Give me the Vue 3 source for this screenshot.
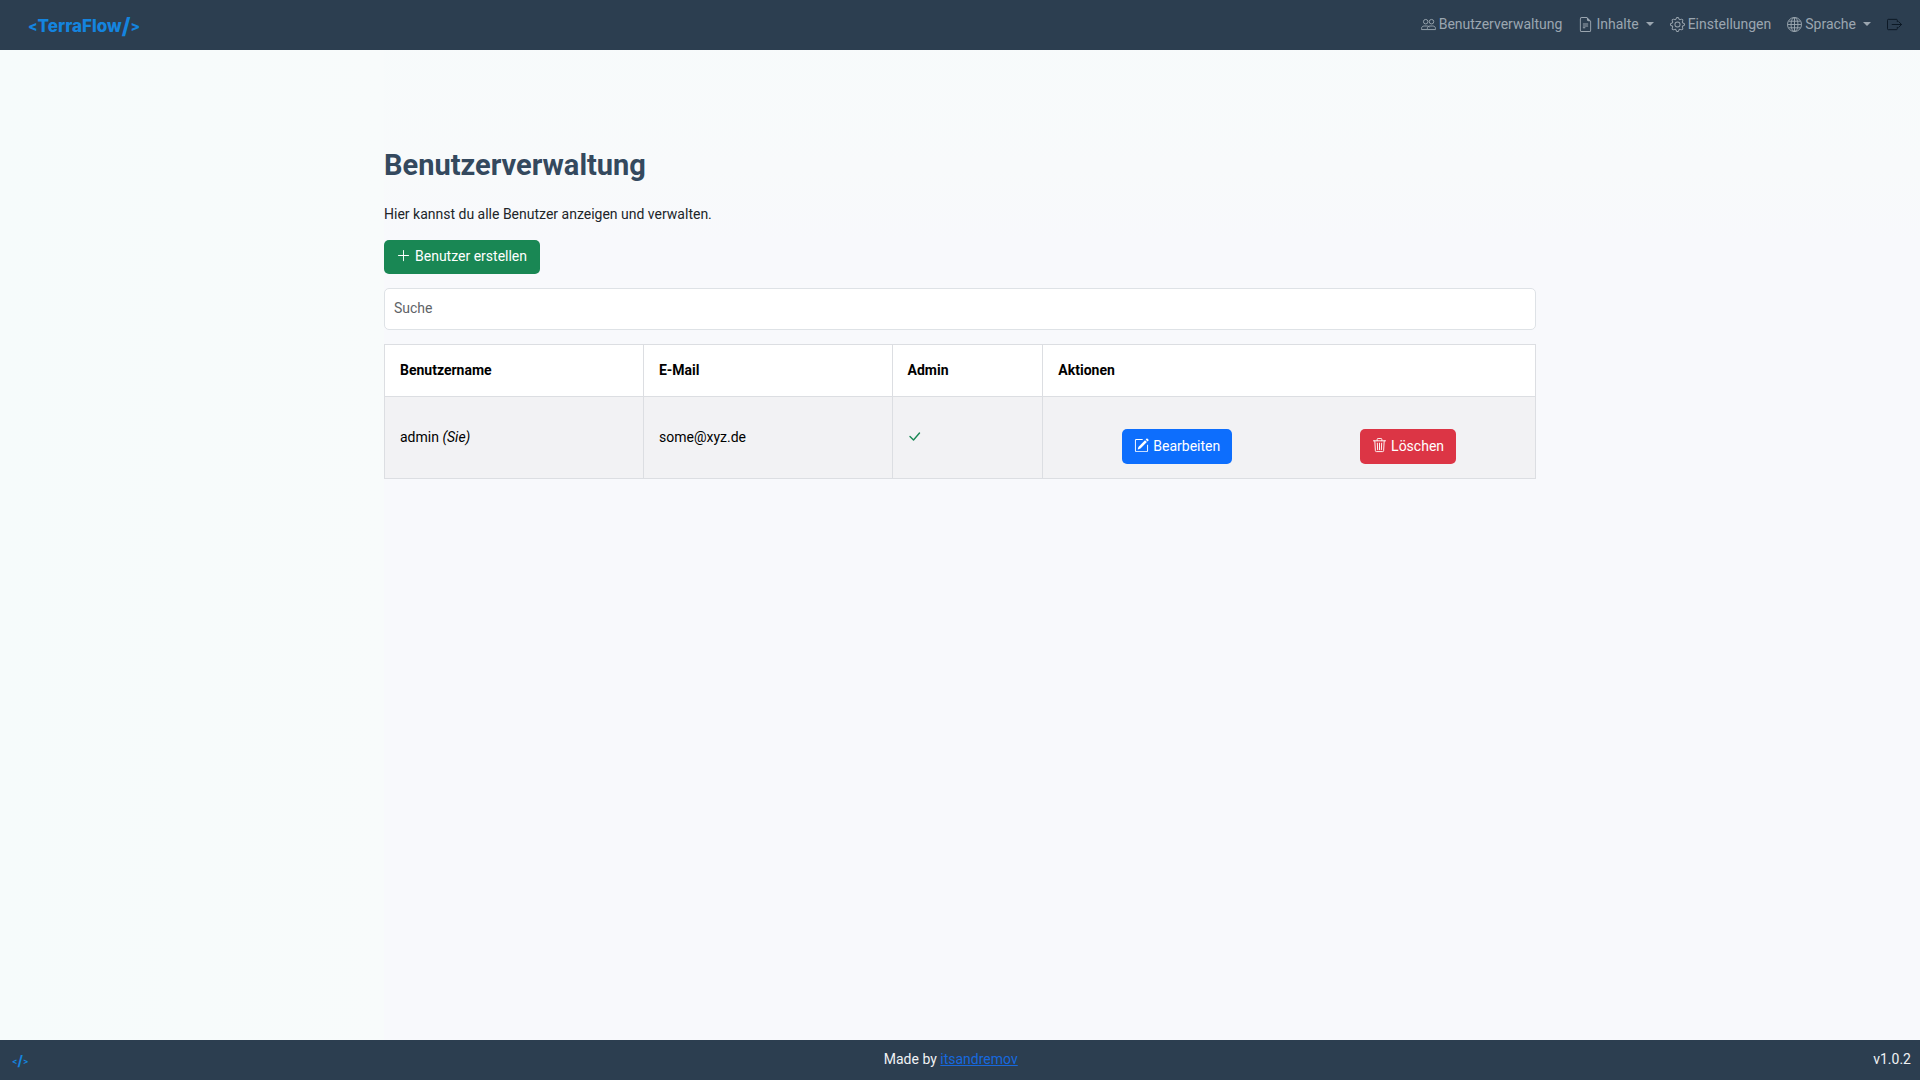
<script setup>
import { ref, computed } from 'vue'

const search = ref('')
const users = ref([{ name: 'admin', mail: 'some@xyz.de', admin: true, self: true }])
const filtered = computed(() => {
  const term = search.value.toLowerCase()
  return users.value.filter((u) => (u.name + u.mail).toLowerCase().includes(term))
})
</script>

<template>
  <div class="page">
    <header class="topbar">
      <a class="brand" href="#" aria-label="TerraFlow"><span class="angle">&lt;</span><span>TerraFlow</span><span class="slash">/</span><span class="angle">&gt;</span></a>
      <nav class="menu">
        <a class="item" href="#">
          <svg class="icon" viewBox="0 0 16 16" fill="none" stroke="currentColor" stroke-linejoin="round"><circle cx="5" cy="5" r="2.4" /><circle cx="11.200" cy="5" r="2.4" /><path d="M.6 13.400v-1.200c0-1.600 1.200-2.600 2.800-2.600h3.200c1.200 0 2 .5 2.400 1.400M.6 13.400h6.200M6.800 13.400v-1c0-1.800 1.200-2.800 2.800-2.800h3c1.600 0 2.800 1 2.800 2.600v1.200z" /></svg>
          <span>Benutzerverwaltung</span>
        </a>
        <button class="item" type="button">
          <svg class="icon" viewBox="0 0 16 16" fill="currentColor"><path d="M5.500 7a.5.5 0 0 0 0 1h5a.5.5 0 0 0 0-1zM5 9.500a.5.5 0 0 1 .5-.5h5a.5.5 0 0 1 0 1h-5a.5.5 0 0 1-.5-.5m0 2a.5.5 0 0 1 .5-.5h2a.5.5 0 0 1 0 1h-2a.5.5 0 0 1-.5-.5" /><path d="M9.500 0H4a2 2 0 0 0-2 2v12a2 2 0 0 0 2 2h8a2 2 0 0 0 2-2V4.500zm0 1v2A1.500 1.500 0 0 0 11 4.500h2V14a1 1 0 0 1-1 1H4a1 1 0 0 1-1-1V2a1 1 0 0 1 1-1z" /></svg>
          <span>Inhalte</span><i class="caret"></i>
        </button>
        <a class="item" href="#">
          <svg class="icon" viewBox="0 0 16 16" fill="currentColor"><path d="M8 4.754a3.246 3.246 0 1 0 0 6.492 3.246 3.246 0 0 0 0-6.492M5.754 8a2.246 2.246 0 1 1 4.492 0 2.246 2.246 0 0 1-4.492 0" /><path d="M9.796 1.343c-.527-1.790-3.065-1.790-3.592 0l-.094.319a.873.873 0 0 1-1.255.520l-.292-.160c-1.640-.892-3.433.902-2.540 2.541l.159.292a.873.873 0 0 1-.520 1.255l-.319.094c-1.790.527-1.790 3.065 0 3.592l.319.094a.873.873 0 0 1 .520 1.255l-.160.292c-.892 1.640.901 3.434 2.541 2.540l.292-.159a.873.873 0 0 1 1.255.520l.094.319c.527 1.790 3.065 1.790 3.592 0l.094-.319a.873.873 0 0 1 1.255-.520l.292.160c1.640.893 3.434-.902 2.540-2.541l-.159-.292a.873.873 0 0 1 .520-1.255l.319-.094c1.790-.527 1.790-3.065 0-3.592l-.319-.094a.873.873 0 0 1-.520-1.255l.160-.292c.893-1.640-.902-3.433-2.541-2.540l-.292.159a.873.873 0 0 1-1.255-.520zm-2.633.283c.246-.835 1.428-.835 1.674 0l.094.319a1.873 1.873 0 0 0 2.693 1.115l.291-.160c.764-.415 1.600.420 1.184 1.185l-.159.292a1.873 1.873 0 0 0 1.116 2.692l.318.094c.835.246.835 1.428 0 1.674l-.319.094a1.873 1.873 0 0 0-1.115 2.693l.160.291c.415.764-.420 1.600-1.185 1.184l-.291-.159a1.873 1.873 0 0 0-2.693 1.116l-.094.318c-.246.835-1.428.835-1.674 0l-.094-.319a1.873 1.873 0 0 0-2.692-1.115l-.292.160c-.764.415-1.600-.420-1.184-1.185l.159-.291A1.873 1.873 0 0 0 1.945 8.930l-.319-.094c-.835-.246-.835-1.428 0-1.674l.319-.094A1.873 1.873 0 0 0 3.060 4.377l-.160-.292c-.415-.764.420-1.600 1.185-1.184l.292.159a1.873 1.873 0 0 0 2.692-1.115z" /></svg>
          <span>Einstellungen</span>
        </a>
        <button class="item" type="button">
          <svg class="icon" viewBox="0 0 16 16" fill="none" stroke="currentColor"><circle cx="8" cy="8" r="7.500" /><ellipse cx="8" cy="8" rx="3.700" ry="7.500" /><path d="M8 .5v15M.5 8h15M1.700 4.500h12.600M1.700 11.500h12.600" /></svg>
          <span>Sprache</span><i class="caret"></i>
        </button>
        <button class="item logout" type="button" aria-label="Abmelden">
          <svg class="icon" viewBox="0 0 16 16" fill="none" stroke="currentColor" stroke-linecap="round" stroke-linejoin="round"><path d="M11 5V3.500a1 1 0 0 0-1-1H1.500a1 1 0 0 0-1 1v9a1 1 0 0 0 1 1H10a1 1 0 0 0 1-1V11M5.500 8h9.800M12.500 5l3 3-3 3" /></svg>
        </button>
      </nav>
    </header>

    <main class="content">
      <h1>Benutzerverwaltung</h1>
      <p>Hier kannst du alle Benutzer anzeigen und verwalten.</p>
      <button class="btn create" type="button">
        <svg class="icon" viewBox="0 0 16 16" fill="currentColor"><path d="M8 2a.5.5 0 0 1 .5.5v5h5a.5.5 0 0 1 0 1h-5v5a.5.5 0 0 1-1 0v-5h-5a.5.5 0 0 1 0-1h5v-5A.5.5 0 0 1 8 2" /></svg>
        <span>Benutzer erstellen</span>
      </button>
      <input v-model="search" class="search" type="text" placeholder="Suche" aria-label="Suche" />
      <table>
        <colgroup>
          <col class="col-name" /><col class="col-mail" /><col class="col-admin" /><col />
        </colgroup>
        <thead>
          <tr>
            <th scope="col">Benutzername</th>
            <th scope="col">E-Mail</th>
            <th scope="col">Admin</th>
            <th scope="col">Aktionen</th>
          </tr>
        </thead>
        <tbody>
          <tr v-for="user in filtered" :key="user.name">
            <td>{{ user.name }} <em v-if="user.self">(Sie)</em></td>
            <td>{{ user.mail }}</td>
            <td>
              <svg v-if="user.admin" class="icon check" viewBox="0 0 15 15" fill="none" stroke="currentColor" stroke-width="1.400" stroke-linecap="round" stroke-linejoin="round"><path d="M2 6.500l3.500 3.500L11.500 3" /></svg>
            </td>
            <td>
              <div class="actions">
                <button class="btn edit" type="button">
                  <svg class="icon" viewBox="0 0 16 16" fill="currentColor"><path d="M15.502 1.940a.5.5 0 0 1 0 .706L14.459 3.690l-2-2L13.502.646a.5.5 0 0 1 .707 0l1.293 1.293zm-1.750 2.456-2-2L4.939 9.210a.5.5 0 0 0-.121.196l-.805 2.414a.25.25 0 0 0 .316.316l2.414-.805a.5.5 0 0 0 .196-.120z" /><path fill-rule="evenodd" d="M1 13.500A1.500 1.500 0 0 0 2.500 15h11a1.500 1.500 0 0 0 1.500-1.500v-6a.5.5 0 0 0-1 0v6a.5.5 0 0 1-.5.5h-11a.5.5 0 0 1-.5-.5v-11a.5.5 0 0 1 .5-.5H9a.5.5 0 0 0 0-1H2.500A1.500 1.500 0 0 0 1 2.500z" /></svg>
                  <span>Bearbeiten</span>
                </button>
                <button class="btn delete" type="button">
                  <svg class="icon" viewBox="0 0 16 16" fill="none" stroke="currentColor" stroke-linecap="round" stroke-linejoin="round"><path d="M1.500 3h13M5.500 3V1.500a1 1 0 0 1 1-1h3a1 1 0 0 1 1 1V3M3 3l.6 10.500a1 1 0 0 0 1 1h6.800a1 1 0 0 0 1-1L13 3M5.700 5.500l.3 7M8 5.500v7M10.300 5.500l-.3 7" /></svg>
                  <span>Löschen</span>
                </button>
              </div>
            </td>
          </tr>
        </tbody>
      </table>
    </main>

    <footer class="bottombar">
      <a class="mark" href="#" aria-label="Code">&lt;<span>/</span>&gt;</a>
      <p>Made by <a href="#">itsandremov</a></p>
      <span>v1.0.2</span>
    </footer>
  </div>
</template>

<style>
body {
  margin: 0;
}
</style>

<style scoped>
* {
  box-sizing: border-box;
}
.page {
  min-height: 100vh;
  display: flex;
  flex-direction: column;
  font: 14px/21px Roboto, sans-serif;
  color: #212529;
  background: linear-gradient(90deg, #f6fbfb 0, #f8fbfb 20%, transparent 20%),
    linear-gradient(180deg, #f7fbfb 0, #f8fafb 168px, #f8f9fc 240px);
}
button,
input {
  font: inherit;
}
button {
  cursor: pointer;
}
.icon {
  width: 15px;
  height: 15px;
  flex: none;
}
.topbar {
  height: 50px;
  display: flex;
  align-items: center;
  justify-content: space-between;
  padding: 0 18px 2px 28px;
  background: #2c3e50;
}
.brand {
  display: flex;
  align-items: center;
  padding-top: 4px;
  font: 800 17px/22px Inter, sans-serif;
  color: #1484df;
  text-decoration: none;
}
.angle {
  font-size: 14px;
}
.slash {
  font-size: 22px;
}
.menu {
  display: flex;
  align-items: center;
  gap: 16px;
}
.item {
  display: flex;
  align-items: center;
  gap: 3px;
  padding: 0;
  border: 0;
  background: none;
  color: #9ba6b0;
  text-decoration: none;
}
.caret {
  margin-left: 4px;
  border: 4px solid transparent;
  border-top-color: currentColor;
  border-bottom: 0;
}
.logout {
  color: #0b1622;
}
.content {
  flex: 1;
  width: 60%;
  margin: 0 auto;
  padding-top: 98px;
}
h1 {
  margin: 0 0 21px;
  font-size: 29px;
  line-height: 35px;
  font-weight: 700;
  color: #34495e;
}
p {
  margin: 0;
}
.btn {
  display: flex;
  align-items: center;
  gap: 4px;
  height: 35px;
  padding: 0 12px;
  border: 0;
  border-radius: 5px;
  color: #fff;
}
.btn .icon {
  margin-bottom: 2px;
}
.create {
  height: 34px;
  margin: 15px 0 14px;
  padding: 0 13px 2px 12px;
  background: #198754;
}
.search {
  display: block;
  width: 100%;
  height: 42px;
  margin-bottom: 14px;
  padding: 0 9px 2px;
  border: 1px solid #dee2e6;
  border-radius: 5px;
  background: #fff;
  color: #212529;
}
.search::placeholder {
  color: #5f6468;
  opacity: 1;
}
table {
  width: 100%;
  table-layout: fixed;
  border-collapse: collapse;
  color: #000;
}
.col-name {
  width: 22.5%;
}
.col-mail {
  width: 21.6%;
}
.col-admin {
  width: 13.1%;
}
th,
td {
  padding: 15px;
  border: 1px solid #dcdee2;
  text-align: left;
  background: #fff;
}
td {
  padding: 14px 15px;
  background: #f2f2f4;
}
.check {
  display: block;
  color: #198754;
}
.actions {
  display: flex;
  justify-content: space-around;
  padding-top: 18px;
}
.edit {
  background: #0d6efd;
}
.delete {
  background: #dc3545;
}
.bottombar {
  height: 40px;
  display: flex;
  justify-content: space-between;
  align-items: center;
  padding: 0 9px 2px 12px;
  background: #2c3e50;
  color: #f0f2f4;
}
.bottombar p a {
  color: #1769df;
}
.mark {
  display: flex;
  align-items: center;
  padding-top: 4px;
  font: 700 8px/16px Inter, sans-serif;
  color: #1484df;
  text-decoration: none;
}
.mark span {
  font-size: 14px;
}
</style>
